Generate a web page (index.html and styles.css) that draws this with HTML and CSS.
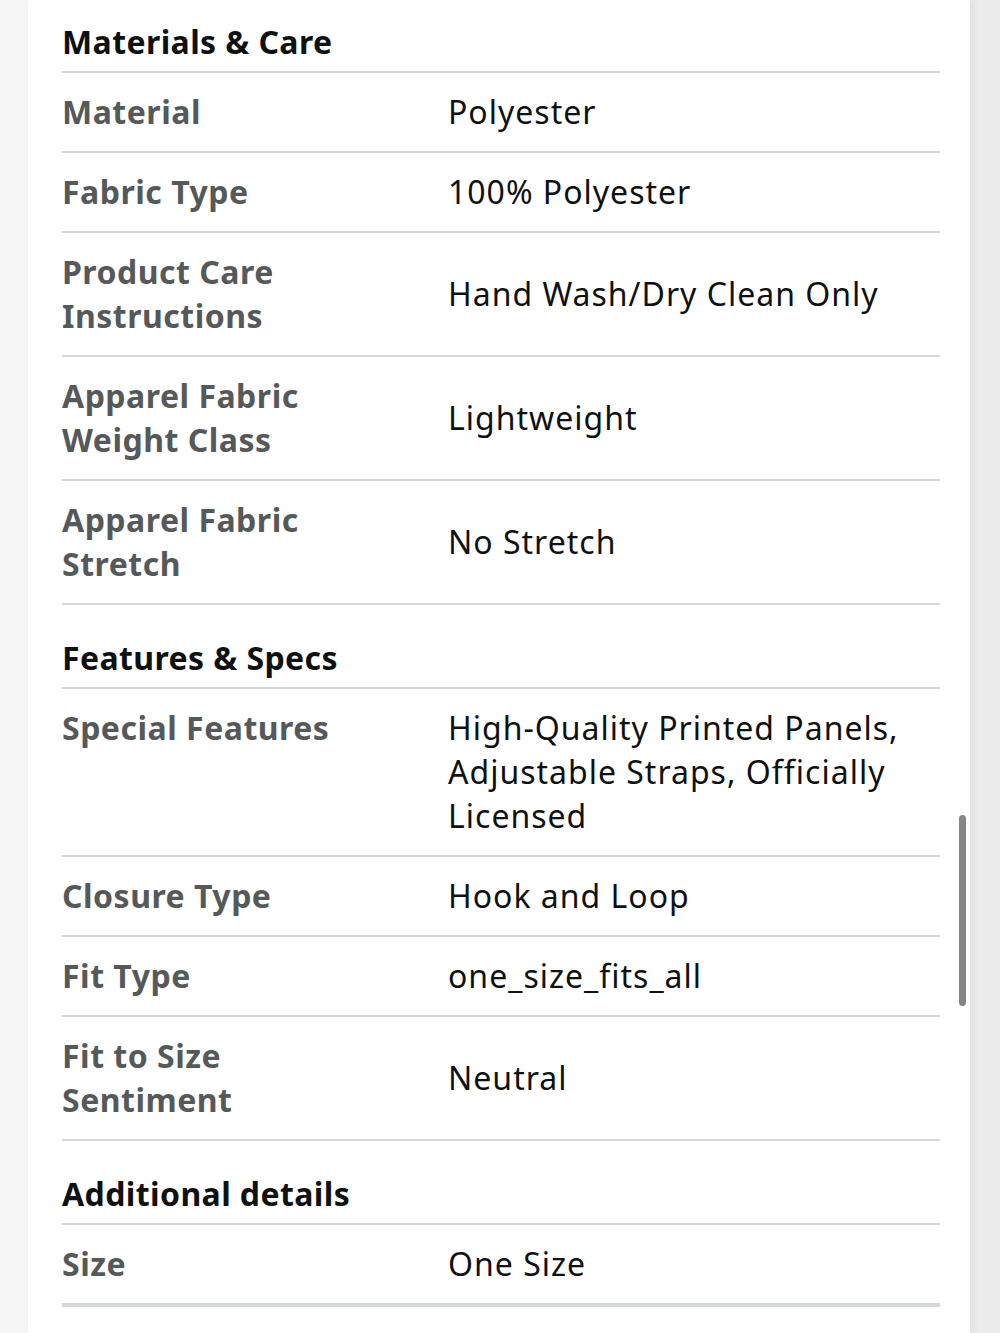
FILE: index.html
```html
<!DOCTYPE html>
<html lang="en">
<head>
    <meta charset="UTF-8">
    <title>Product details</title>
    <link rel="stylesheet" href="styles.css">
</head>
<body>
    <div class="page">
        <div class="details">
            <h2 class="section-title first">Materials &amp; Care</h2>
            <div class="row">
                <div class="label">Material</div>
                <div class="value">Polyester</div>
            </div>
            <div class="row">
                <div class="label">Fabric Type</div>
                <div class="value">100% Polyester</div>
            </div>
            <div class="row middle">
                <div class="label">Product Care Instructions</div>
                <div class="value">Hand Wash/Dry Clean Only</div>
            </div>
            <div class="row middle">
                <div class="label">Apparel Fabric Weight Class</div>
                <div class="value">Lightweight</div>
            </div>
            <div class="row middle">
                <div class="label">Apparel Fabric Stretch</div>
                <div class="value">No Stretch</div>
            </div>

            <h2 class="section-title">Features &amp; Specs</h2>
            <div class="row">
                <div class="label">Special Features</div>
                <div class="value">High-Quality Printed Panels, Adjustable Straps, Officially Licensed</div>
            </div>
            <div class="row">
                <div class="label">Closure Type</div>
                <div class="value">Hook and Loop</div>
            </div>
            <div class="row">
                <div class="label">Fit Type</div>
                <div class="value">one_size_fits_all</div>
            </div>
            <div class="row middle">
                <div class="label">Fit to Size Sentiment</div>
                <div class="value">Neutral</div>
            </div>

            <h2 class="section-title">Additional details</h2>
            <div class="row last">
                <div class="label">Size</div>
                <div class="value">One Size</div>
            </div>
        </div>
        <div class="scroll-thumb"></div>
    </div>
    <div class="rail"></div>
</body>
</html>
```

FILE: styles.css
```css
body {
    margin: 0;
    display: flex;
    min-height: 100vh;
    background-color: #f6f6f6;
    font-family: "Noto Sans", sans-serif;
    color: #0f1111;
}

.page {
    position: relative;
    width: 942px;
    margin-left: 28px;
    background-color: #fff;
    box-shadow: 4px 0 8px rgba(0, 0, 0, 0.06);
}

.details {
    width: 878px;
    padding-left: 34px;
}

.section-title {
    margin: 0;
    padding: 31px 0 7px;
    font-size: 32px;
    line-height: 44px;
    font-weight: 700;
    letter-spacing: 0.4px;
    border-bottom: 2px solid #d5d9d9;
}

.section-title.first {
    padding-top: 20px;
    padding-bottom: 7px;
}

.row {
    display: grid;
    grid-template-columns: 386px 1fr;
    padding: 17px 0;
    font-size: 32px;
    line-height: 44px;
    border-bottom: 2px solid #d5d9d9;
}

.row.middle {
    align-items: center;
}

.row.last {
    border-bottom-width: 4px;
}

.label {
    font-weight: 700;
    color: #565959;
    letter-spacing: 0.5px;
    padding-right: 80px;
}

.value {
    color: #0f1111;
    letter-spacing: 1px;
}

.scroll-thumb {
    position: absolute;
    left: 931px;
    top: 815px;
    width: 7px;
    height: 191px;
    border-radius: 4px;
    background-color: #858585;
}

.rail {
    flex: 1;
    background-color: #ececec;
}
```
